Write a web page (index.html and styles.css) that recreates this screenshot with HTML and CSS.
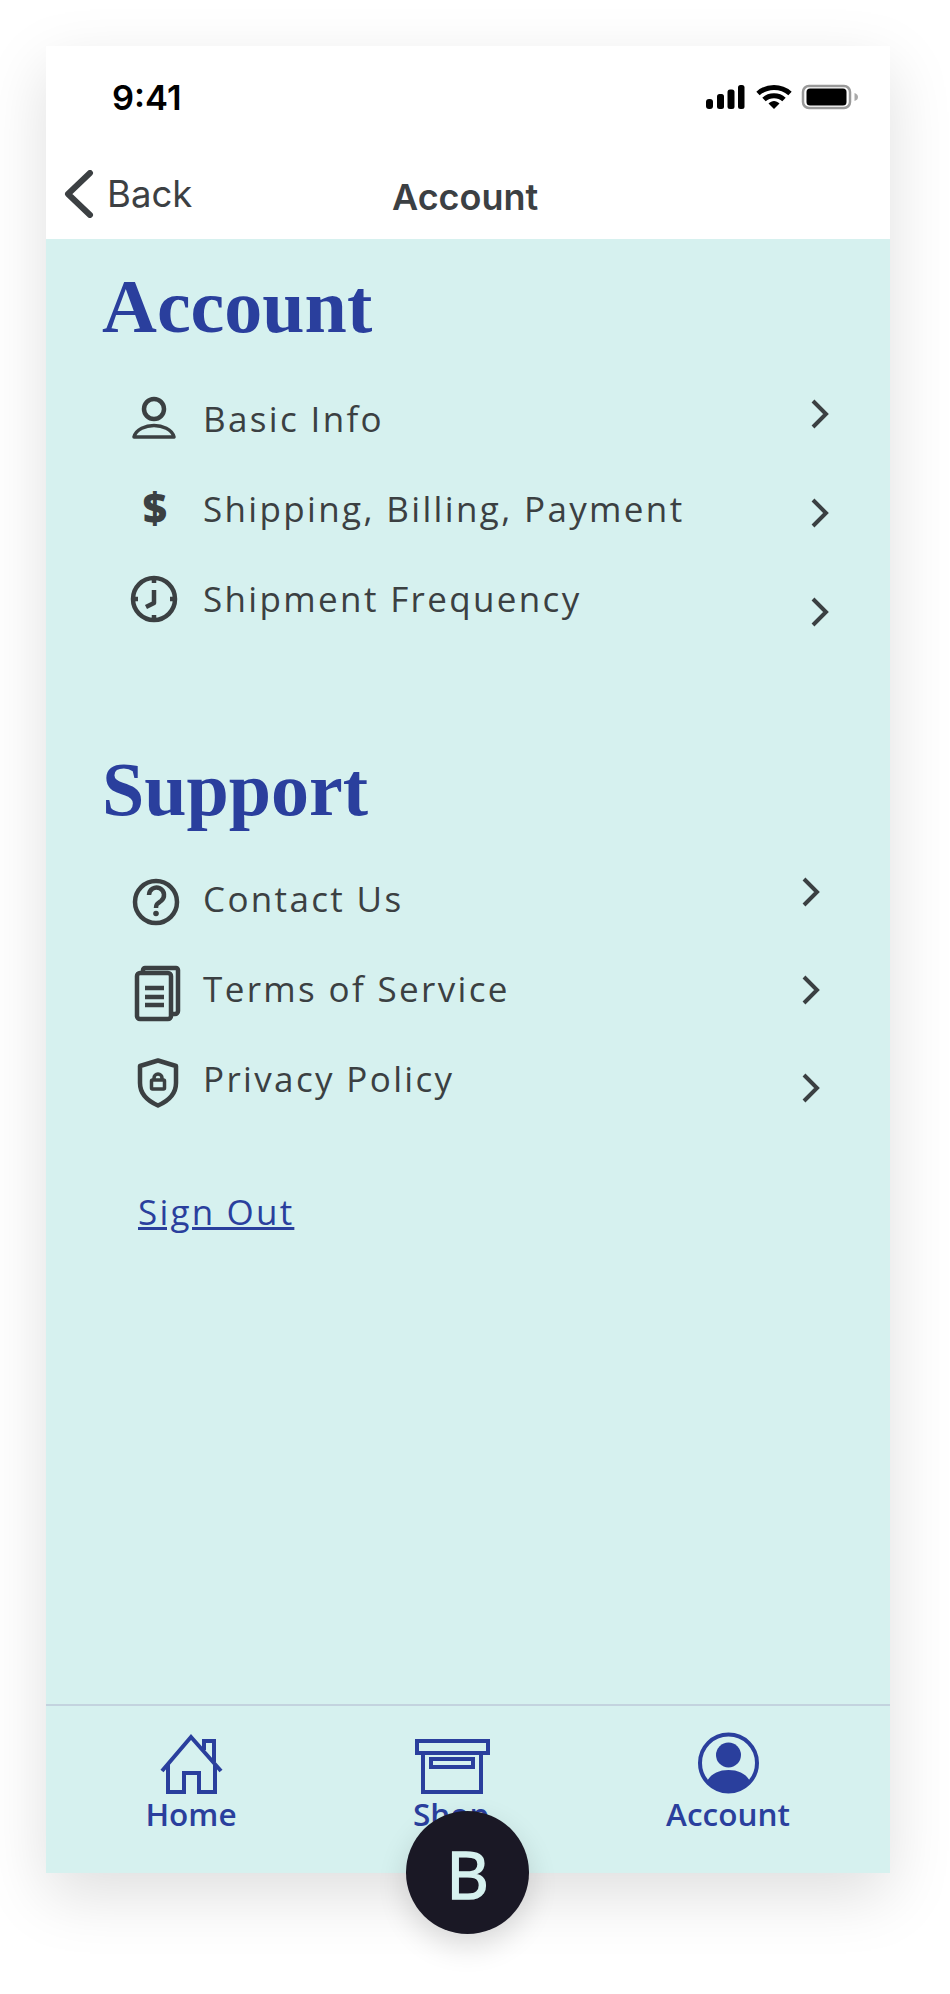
FILE: index.html
```html
<!DOCTYPE html>
<html lang="en">
<head>
    <meta charset="utf-8"/>
    <title>Account</title>
    <link rel="stylesheet" href="styles.css">
</head>
<body>
<div class="phone">
    <div class="status">
        <span class="time">9:41</span>
        <svg class="status-icons" width="153" height="26" viewBox="0 0 153 26">
            <rect x="0" y="15" width="7" height="10" rx="3"/>
            <rect x="11" y="10" width="7" height="15" rx="2.5"/>
            <rect x="21.5" y="5.5" width="7" height="19.5" rx="2.5"/>
            <rect x="32" y="1" width="6.500" height="24" rx="2.5"/>
            <path class="wifi" d="M52 9.500C61 1.500 75 1.500 84 9.500"/>
            <path class="wifi" d="M58 15.500C63.500 10.500 72.500 10.500 78 15.500"/>
            <path d="M62.500 19.500C66 16 70 16 73.500 19.500L68 25Z"/>
            <rect class="batt" x="97" y="2" width="47" height="22" rx="6"/>
            <rect x="100.500" y="4.500" width="40" height="17" rx="3.500"/>
            <path class="nub" d="M148.500 9V17C151 16 152 15 152 13C152 11 151 10 148.500 9Z"/>
        </svg>
    </div>
    <div class="topbar">
        <div class="back">
            <svg width="30" height="48" viewBox="0 0 30 48"><polyline class="back-arrow" points="26,3 4,24 26,45"/></svg>
            <span>Back</span>
        </div>
        <div class="title">Account</div>
    </div>

    <div class="content">
        <h1 class="heading">Account</h1>
        <div class="menu">
            <ul class="links">
                <li>
                    <svg class="ico" width="60" height="90" viewBox="0 0 60 90"><circle cx="30" cy="36" r="10"/><path class="thin" d="M10 64C12 56 22 52.500 30 52.500C38 52.500 48 56 50 64Z"/></svg>
                    Basic Info
                </li>
                <li>
                    <svg class="ico" width="60" height="90" viewBox="0 0 60 90"><text class="dollar" x="32" y="60">$</text></svg>
                    Shipping, Billing, Payment
                </li>
                <li>
                    <svg class="ico" width="60" height="90" viewBox="0 0 60 90"><circle cx="30" cy="46" r="21"/><path d="M30 25V30M30 62V67M9 46H14M46 46H51M30 37V50L22 54"/></svg>
                    Shipment Frequency
                </li>
            </ul>
            <div class="arrows">
                <svg width="18" height="30" viewBox="0 0 18 30"><polyline points="2,2 15,15 2,28"/></svg>
                <svg width="18" height="30" viewBox="0 0 18 30"><polyline points="2,2 15,15 2,28"/></svg>
                <svg width="18" height="30" viewBox="0 0 18 30"><polyline points="2,2 15,15 2,28"/></svg>
            </div>
        </div>

        <h1 class="heading heading-support">Support</h1>
        <div class="menu menu-support">
            <ul class="links">
                <li>
                    <svg class="ico" width="60" height="90" viewBox="0 0 60 90"><circle cx="32" cy="49" r="21"/><path d="M25 42a7.500 7.500 0 1 1 12 6c-3.500 2.500-5 3-5 7"/><circle class="dot" cx="32" cy="60.500" r="2.800"/></svg>
                    Contact Us
                </li>
                <li>
                    <svg class="ico" width="60" height="90" viewBox="0 0 60 90"><rect x="13" y="30" width="34" height="46" rx="3"/><path d="M19 29V27a2 2 0 0 1 2-2H52a2 2 0 0 1 2 2V68a3 3 0 0 1-3 3H48M21 45H40M21 54H40M21 62H40"/></svg>
                    Terms of Service
                </li>
                <li>
                    <svg class="ico" width="60" height="90" viewBox="0 0 60 90"><path d="M34 27.500L52 33V50C52 62 42 69 34 72.500C26 69 16 62 16 50V33Z"/><rect class="lock" x="27.500" y="47" width="13" height="9" rx="1"/><path class="lock" d="M30 47V45a4 4 0 0 1 8 0V47"/></svg>
                    Privacy Policy
                </li>
            </ul>
            <div class="arrows">
                <svg width="18" height="30" viewBox="0 0 18 30"><polyline points="2,2 15,15 2,28"/></svg>
                <svg width="18" height="30" viewBox="0 0 18 30"><polyline points="2,2 15,15 2,28"/></svg>
                <svg width="18" height="30" viewBox="0 0 18 30"><polyline points="2,2 15,15 2,28"/></svg>
            </div>
        </div>
        <a class="signout" href="#">Sign Out</a>
    </div>

    <div class="tabs">
        <div class="tab">
            <svg width="80" height="62" viewBox="0 0 80 62"><path d="M11 39L40 5L70 39M17 32V60H33V41H48V60H64V32M53 18V9H63V30"/></svg>
            <span>Home</span>
        </div>
        <div class="tab">
            <svg width="80" height="62" viewBox="0 0 80 62"><rect x="6" y="9" width="71" height="12"/><path d="M12 21V60H70V21"/><rect x="20" y="27" width="42" height="8"/></svg>
            <span>Shop</span>
        </div>
        <div class="tab">
            <svg width="80" height="62" viewBox="0 0 80 62"><circle cx="40.500" cy="31" r="28.500"/><ellipse class="fill" cx="40.500" cy="23" rx="12.500" ry="12.500"/><path class="fill" d="M18.500 50C22.500 42 30.500 38 40.500 38C50.500 38 58.500 42 62.500 50A29 29 0 0 1 18.500 50Z"/></svg>
            <span>Account</span>
        </div>
    </div>

    <div class="fab">B</div>
</div>
</body>
</html>
```

FILE: styles.css
```css
* {
    padding: 0;
    margin: 0;
    list-style: none;
    box-sizing: border-box;
}
body {
    height: 1994px;
    padding: 46px 60px 0 46px;
    background: #fff;
    overflow: hidden;
}

.phone {
    position: relative;
    display: flex;
    flex-direction: column;
    width: 844px;
    height: 1827px;
    background: #fff;
    box-shadow: 0 22px 60px rgba(0,0,0,.13);
}

/* status bar */
.status {
    display: flex;
    justify-content: space-between;
    align-items: center;
    height: 102px;
    padding: 0 31px 0 66px;
}
.time {
    font: 600 34.5px "Inter", "Liberation Sans", sans-serif;
    color: #000;
}
.status-icons { fill: #000; }
.status-icons .wifi { fill: none; stroke: #000; stroke-width: 5; }
.status-icons .batt { fill: none; stroke: #999; stroke-width: 2.5; }
.status-icons .nub { fill: #aaa; }

/* top nav */
.topbar {
    display: flex;
    align-items: center;
    height: 91px;
    padding-left: 18px;
}
.back {
    display: flex;
    align-items: center;
    gap: 13px;
    width: 328px;
    font: 36.5px "Inter", "Liberation Sans", sans-serif;
    color: #3c4043;
}
.back-arrow { fill: none; stroke: #3c4043; stroke-width: 6; stroke-linecap: round; stroke-linejoin: round; }
.title {
    font: 600 36px "Inter", "Liberation Sans", sans-serif;
    color: #3c4043;
    margin-top: 6px;
}

/* main */
.content {
    flex: 1;
    padding: 31px 61px 0 56px;
    background: #d6f1ef;
}
.heading {
    font: bold 76px/72px "Liberation Serif", serif;
    color: #2a3f9d;
}
.heading-support { margin-top: 110px; }

.menu {
    display: flex;
    justify-content: space-between;
    margin-top: 31px;
}
.menu-support { margin-top: 28px; padding-right: 9px; }
.links { margin-left: 23px; }
.links li {
    display: flex;
    align-items: center;
    gap: 19px;
    height: 90px;
    font: 35px "Open Sans", sans-serif;
    letter-spacing: 2.35px;
    color: #3b4042;
    white-space: nowrap;
}
.ico { margin-left: -1px; fill: none; stroke: #3b4042; stroke-width: 4.5; stroke-linejoin: round; }
.ico .thin { stroke-width: 3.5; }
.ico .dot { fill: #3b4042; stroke: none; }
.ico .dollar {
    font: 800 42px "Open Sans", sans-serif;
    text-anchor: middle;
    fill: #3b4042;
    stroke: none;
}
.ico .lock { stroke-width: 3.5; }

.arrows {
    display: flex;
    flex-direction: column;
    gap: 69px;
    padding-top: 26px;
}
.menu-support .arrows { gap: 68px; padding-top: 24px; }
.arrows polyline { fill: none; stroke: #3b4042; stroke-width: 4; }

.signout {
    display: inline-block;
    margin: 64px 0 0 36px;
    font: 35px/50px "Open Sans", sans-serif;
    letter-spacing: 2.2px;
    color: #2a3f9d;
}

/* bottom tabs */
.tabs {
    display: grid;
    grid-template-columns: 290px 230px 324px;
    height: 169px;
    padding-top: 25px;
    background: #d6f1ef;
    border-top: 2px solid #c3d3de;
}
.tab {
    display: flex;
    flex-direction: column;
    align-items: center;
    font: 600 31.5px/40px "Open Sans", sans-serif;
    color: #2a3f9d;
}
.tab svg { fill: none; stroke: #2a3f9d; stroke-width: 4; margin-top: 1px; }
.tab .fill { fill: #2a3f9d; stroke: none; }

.fab {
    position: absolute;
    left: 360px;
    top: 1765px;
    display: flex;
    align-items: center;
    justify-content: center;
    width: 123px;
    height: 123px;
    border-radius: 50%;
    background: #1a1825;
    color: #d6f1ef;
    font: 500 66px "Open Sans", sans-serif;
    -webkit-text-stroke: 1.5px #d6f1ef;
    box-shadow: 0 12px 30px rgba(0,0,0,.14);
}
```
